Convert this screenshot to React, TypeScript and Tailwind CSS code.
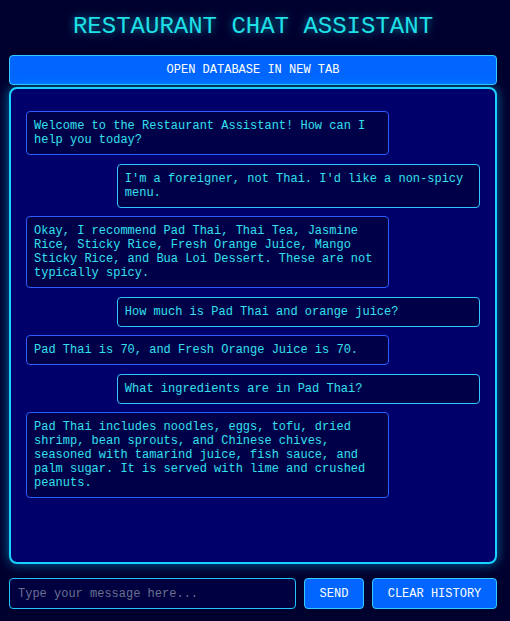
import React from "react";

const messages: { role: "bot" | "user"; text: string }[] = [
  { role: "bot", text: "Welcome to the Restaurant Assistant! How can I help you today?" },
  { role: "user", text: "I'm a foreigner, not Thai. I'd like a non-spicy menu." },
  {
    role: "bot",
    text: "Okay, I recommend Pad Thai, Thai Tea, Jasmine Rice, Sticky Rice, Fresh Orange Juice, Mango Sticky Rice, and Bua Loi Dessert. These are not typically spicy.",
  },
  { role: "user", text: "How much is Pad Thai and orange juice?" },
  { role: "bot", text: "Pad Thai is 70, and Fresh Orange Juice is 70." },
  { role: "user", text: "What ingredients are in Pad Thai?" },
  {
    role: "bot",
    text: "Pad Thai includes noodles, eggs, tofu, dried shrimp, bean sprouts, and Chinese chives, seasoned with tamarind juice, fish sauce, and palm sugar. It is served with lime and crushed peanuts.",
  },
];

export default function App() {
  return (
    <div
      className="w-[510px] h-[621px] bg-[#00002e] pl-[9px] pr-[13px] pt-[13px] flex flex-col"
      style={{ fontFamily: '"Liberation Mono", "Courier New", monospace' }}
    >
      <h1
        className="text-center text-[24px] leading-[28px] text-[#1fe0e6] tracking-normal"
        style={{ textShadow: "0 0 8px rgba(0, 220, 255, 0.6)" }}
      >
        RESTAURANT CHAT ASSISTANT
      </h1>
      <button className="mt-[14px] h-[30px] w-full rounded-[4px] border border-[#33ccff] bg-[#0066ff] text-[12px] text-white">
        OPEN DATABASE IN NEW TAB
      </button>
      <div
        className="mt-[2px] h-[477px] rounded-[8px] border-2 border-[#1ad2ff] bg-[#00006a] px-[15px] pt-[22px] flex flex-col gap-[8.5px]"
        style={{ boxShadow: "0 0 12px rgba(0, 200, 255, 0.55)" }}
      >
        {messages.map((m, i) => (
          <div
            key={i}
            className={
              m.role === "bot"
                ? "max-w-[80%] w-[80%] self-start rounded-[4px] border border-[#2b5cff] bg-[#000048] px-[7px] py-[7px] text-[12px] leading-[14px] text-[#33e0ee]"
                : "max-w-[80%] w-[80%] self-end rounded-[4px] border border-[#33c4ff] bg-[#000048] px-[7px] py-[7px] text-[12px] leading-[14px] text-[#33e0ee]"
            }
          >
            {m.text}
          </div>
        ))}
      </div>
      <div className="mt-[14px] flex gap-[8px] h-[31px]">
        <input
          className="flex-1 min-w-0 rounded-[4px] border border-[#22c4ff] bg-[#000040] px-[8px] text-[12px] text-[#33dde8] placeholder:text-[#6a7090] outline-none"
          style={{ fontFamily: '"Liberation Mono", "Courier New", monospace' }}
          placeholder="Type your message here..."
        />
        <button className="w-[60px] rounded-[4px] border border-[#33ccff] bg-[#0066ff] text-[12px] text-white">
          SEND
        </button>
        <button className="w-[125px] rounded-[4px] border border-[#33ccff] bg-[#0066ff] text-[12px] text-white">
          CLEAR HISTORY
        </button>
      </div>
    </div>
  );
}
